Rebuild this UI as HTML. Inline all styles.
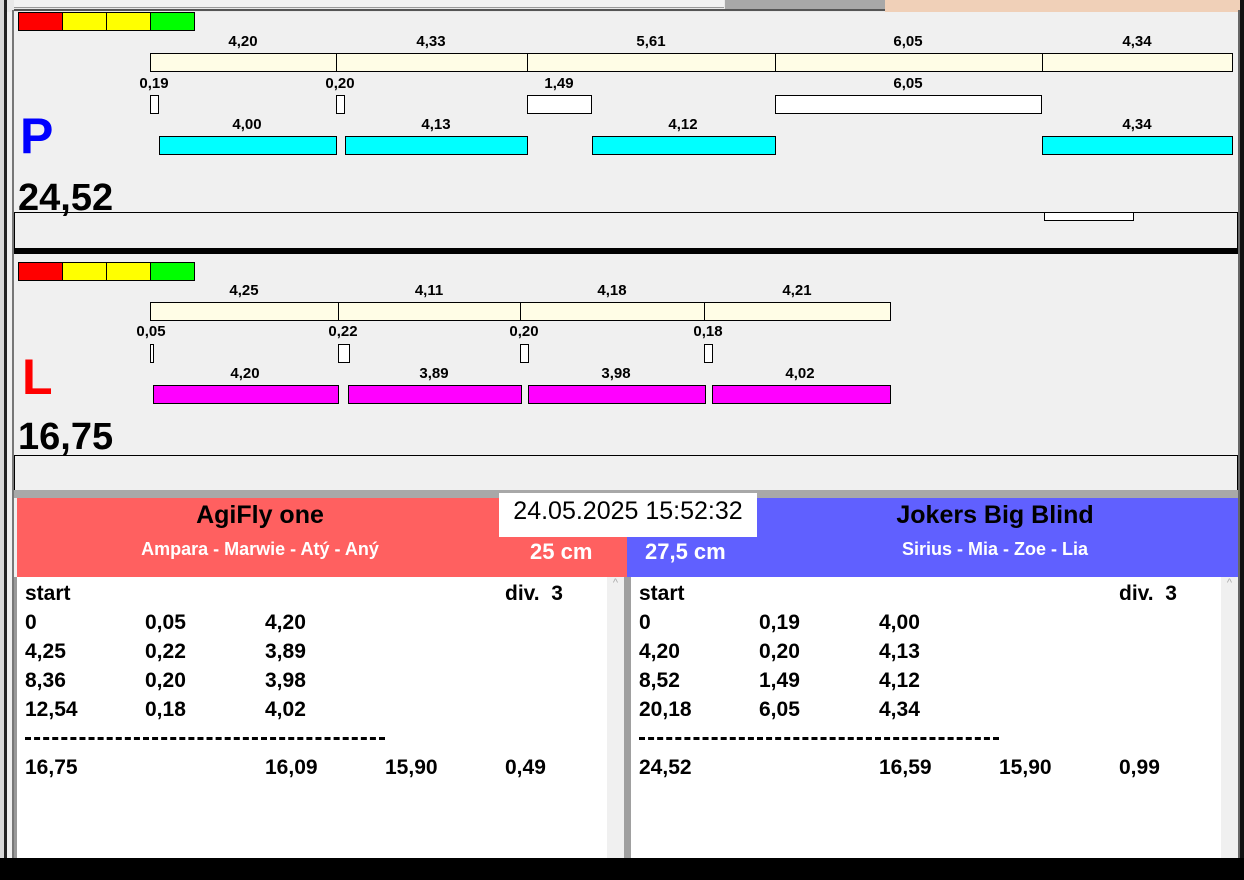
<!DOCTYPE html>
<html><head><meta charset="utf-8"><style>
*{margin:0;padding:0;box-sizing:border-box}
body{width:1244px;height:880px;overflow:hidden;background:#f0f0f0;font-family:"Liberation Sans",Arial,sans-serif;position:relative}
div{position:absolute}
.b{border:1px solid #000}
.l{width:100px;text-align:center;font-weight:bold;font-size:15px;line-height:16px;color:#000;margin-top:2px}
.cr{background:#fffde6}
.cy{background:#00ffff}
.mg{background:#ff00ff}
.w{background:#fff}
.t{font-weight:bold;font-size:21px;line-height:24px;color:#000;white-space:nowrap;margin-top:1px}
</style></head><body>
<!-- top strip -->
<div style="left:0;top:0;width:1244px;height:12px;background:#e8e8e8"></div>
<div style="left:14px;top:0;width:710px;height:8px;background:#f2f2f2;border-bottom:1px solid #999"></div>
<div style="left:725px;top:0;width:160px;height:9px;background:#a8a8a8"></div>
<div style="left:885px;top:0;width:355px;height:12px;background:#f0d0b8"></div>
<div style="left:14px;top:9px;width:871px;height:2px;background:#555"></div>
<div style="left:0;top:0;width:4px;height:880px;background:#d8d8d8"></div>
<div style="left:4px;top:0;width:3px;height:880px;background:#222"></div>
<div style="left:12px;top:10px;width:2px;height:850px;background:#777"></div>
<div style="left:1238px;top:10px;width:2px;height:850px;background:#666"></div>
<div style="left:1240px;top:0;width:4px;height:880px;background:#111"></div>

<!-- panel 1 -->
<div class="b" style="left:18px;top:12px;width:45px;height:19px;background:#f00"></div>
<div class="b" style="left:62px;top:12px;width:45px;height:19px;background:#ff0"></div>
<div class="b" style="left:106px;top:12px;width:45px;height:19px;background:#ff0"></div>
<div class="b" style="left:150px;top:12px;width:45px;height:19px;background:#0f0"></div>

<div class="l" style="left:193px;top:32px">4,20</div>
<div class="l" style="left:381px;top:32px">4,33</div>
<div class="l" style="left:601px;top:32px">5,61</div>
<div class="l" style="left:858px;top:32px">6,05</div>
<div class="l" style="left:1087px;top:32px">4,34</div>
<div class="b cr" style="left:150px;top:53px;width:187px;height:19px"></div>
<div class="b cr" style="left:336px;top:53px;width:192px;height:19px"></div>
<div class="b cr" style="left:527px;top:53px;width:249px;height:19px"></div>
<div class="b cr" style="left:775px;top:53px;width:268px;height:19px"></div>
<div class="b cr" style="left:1042px;top:53px;width:191px;height:19px"></div>

<div class="l" style="left:104px;top:74px">0,19</div>
<div class="l" style="left:290px;top:74px">0,20</div>
<div class="l" style="left:509px;top:74px">1,49</div>
<div class="l" style="left:858px;top:74px">6,05</div>
<div class="b w" style="left:150px;top:95px;width:9px;height:19px"></div>
<div class="b w" style="left:336px;top:95px;width:9px;height:19px"></div>
<div class="b w" style="left:527px;top:95px;width:65px;height:19px"></div>
<div class="b w" style="left:775px;top:95px;width:267px;height:19px"></div>

<div class="l" style="left:197px;top:115px">4,00</div>
<div class="l" style="left:386px;top:115px">4,13</div>
<div class="l" style="left:633px;top:115px">4,12</div>
<div class="l" style="left:1087px;top:115px">4,34</div>
<div class="b cy" style="left:159px;top:136px;width:178px;height:19px"></div>
<div class="b cy" style="left:345px;top:136px;width:183px;height:19px"></div>
<div class="b cy" style="left:592px;top:136px;width:184px;height:19px"></div>
<div class="b cy" style="left:1042px;top:136px;width:191px;height:19px"></div>

<div style="left:20px;top:108px;font-weight:bold;font-size:50px;line-height:56px;color:#0000ff">P</div>
<div style="left:18px;top:177px;font-weight:bold;font-size:38px;line-height:42px;color:#000">24,52</div>
<div class="b" style="left:14px;top:212px;width:1224px;height:37px;border-color:#000"></div>
<div class="b w" style="left:1044px;top:212px;width:90px;height:9px"></div>
<div style="left:14px;top:248px;width:1224px;height:6px;background:#000"></div>

<!-- panel 2 -->
<div class="b" style="left:18px;top:262px;width:45px;height:19px;background:#f00"></div>
<div class="b" style="left:62px;top:262px;width:45px;height:19px;background:#ff0"></div>
<div class="b" style="left:106px;top:262px;width:45px;height:19px;background:#ff0"></div>
<div class="b" style="left:150px;top:262px;width:45px;height:19px;background:#0f0"></div>

<div class="l" style="left:194px;top:281px">4,25</div>
<div class="l" style="left:379px;top:281px">4,11</div>
<div class="l" style="left:562px;top:281px">4,18</div>
<div class="l" style="left:747px;top:281px">4,21</div>
<div class="b cr" style="left:150px;top:302px;width:189px;height:19px"></div>
<div class="b cr" style="left:338px;top:302px;width:183px;height:19px"></div>
<div class="b cr" style="left:520px;top:302px;width:185px;height:19px"></div>
<div class="b cr" style="left:704px;top:302px;width:187px;height:19px"></div>

<div class="l" style="left:101px;top:322px">0,05</div>
<div class="l" style="left:293px;top:322px">0,22</div>
<div class="l" style="left:474px;top:322px">0,20</div>
<div class="l" style="left:658px;top:322px">0,18</div>
<div class="b w" style="left:150px;top:344px;width:4px;height:19px"></div>
<div class="b w" style="left:338px;top:344px;width:12px;height:19px"></div>
<div class="b w" style="left:520px;top:344px;width:9px;height:19px"></div>
<div class="b w" style="left:704px;top:344px;width:9px;height:19px"></div>

<div class="l" style="left:195px;top:364px">4,20</div>
<div class="l" style="left:384px;top:364px">3,89</div>
<div class="l" style="left:566px;top:364px">3,98</div>
<div class="l" style="left:750px;top:364px">4,02</div>
<div class="b mg" style="left:153px;top:385px;width:186px;height:19px"></div>
<div class="b mg" style="left:348px;top:385px;width:174px;height:19px"></div>
<div class="b mg" style="left:528px;top:385px;width:178px;height:19px"></div>
<div class="b mg" style="left:712px;top:385px;width:179px;height:19px"></div>

<div style="left:22px;top:351px;font-weight:bold;font-size:50px;line-height:52px;color:#ff0000">L</div>
<div style="left:18px;top:416px;font-weight:bold;font-size:38px;line-height:42px;color:#000">16,75</div>
<div class="b" style="left:14px;top:455px;width:1224px;height:36px"></div>

<!-- bottom -->
<div style="left:14px;top:490px;width:1224px;height:8px;background:#a8a8a8"></div>
<div style="left:17px;top:498px;width:610px;height:79px;background:#ff6060"></div>
<div style="left:627px;top:498px;width:611px;height:79px;background:#6060ff"></div>
<div style="left:17px;top:500px;width:486px;text-align:center;font-weight:bold;font-size:25px;line-height:30px">AgiFly one</div>
<div style="left:17px;top:538px;width:486px;text-align:center;font-weight:bold;font-size:18px;line-height:22px;color:#fff">Ampara - Marwie - Atý - Aný</div>
<div style="left:530px;top:539px;font-weight:bold;font-size:22px;line-height:26px;color:#fff">25 cm</div>
<div style="left:645px;top:539px;font-weight:bold;font-size:22px;line-height:26px;color:#fff">27,5 cm</div>
<div style="left:757px;top:500px;width:476px;text-align:center;font-weight:bold;font-size:25px;line-height:30px">Jokers Big Blind</div>
<div style="left:757px;top:538px;width:476px;text-align:center;font-weight:bold;font-size:18px;line-height:22px;color:#fff">Sirius - Mia - Zoe - Lia</div>
<div style="left:499px;top:493px;width:258px;height:44px;background:#fff;text-align:center;font-size:25px;line-height:36px;color:#000">24.05.2025 15:52:32</div>

<div style="left:14px;top:577px;width:3px;height:281px;background:#999"></div>
<div style="left:17px;top:577px;width:590px;height:281px;background:#fff"></div>
<div style="left:607px;top:577px;width:17px;height:281px;background:#f0f0f0;color:#aaa;font-size:11px;text-align:center">^</div>
<div style="left:624px;top:577px;width:7px;height:281px;background:#a0a0a0"></div>
<div style="left:631px;top:577px;width:590px;height:281px;background:#fff"></div>
<div style="left:1221px;top:577px;width:17px;height:281px;background:#f0f0f0;color:#aaa;font-size:11px;text-align:center">^</div>
<div style="left:0;top:858px;width:1244px;height:22px;background:#000"></div>

<div class="t" style="left:25px;top:581px">start</div><div class="t" style="left:505px;top:581px">div.&nbsp; 3</div>
<div class="t" style="left:25px;top:610px">0</div><div class="t" style="left:145px;top:610px">0,05</div><div class="t" style="left:265px;top:610px">4,20</div>
<div class="t" style="left:25px;top:639px">4,25</div><div class="t" style="left:145px;top:639px">0,22</div><div class="t" style="left:265px;top:639px">3,89</div>
<div class="t" style="left:25px;top:668px">8,36</div><div class="t" style="left:145px;top:668px">0,20</div><div class="t" style="left:265px;top:668px">3,98</div>
<div class="t" style="left:25px;top:697px">12,54</div><div class="t" style="left:145px;top:697px">0,18</div><div class="t" style="left:265px;top:697px">4,02</div>
<div style="left:25px;top:737px;width:360px;height:3px;border-top:3px dashed #000"></div>
<div class="t" style="left:25px;top:755px">16,75</div><div class="t" style="left:265px;top:755px">16,09</div><div class="t" style="left:385px;top:755px">15,90</div><div class="t" style="left:505px;top:755px">0,49</div>

<div class="t" style="left:639px;top:581px">start</div><div class="t" style="left:1119px;top:581px">div.&nbsp; 3</div>
<div class="t" style="left:639px;top:610px">0</div><div class="t" style="left:759px;top:610px">0,19</div><div class="t" style="left:879px;top:610px">4,00</div>
<div class="t" style="left:639px;top:639px">4,20</div><div class="t" style="left:759px;top:639px">0,20</div><div class="t" style="left:879px;top:639px">4,13</div>
<div class="t" style="left:639px;top:668px">8,52</div><div class="t" style="left:759px;top:668px">1,49</div><div class="t" style="left:879px;top:668px">4,12</div>
<div class="t" style="left:639px;top:697px">20,18</div><div class="t" style="left:759px;top:697px">6,05</div><div class="t" style="left:879px;top:697px">4,34</div>
<div style="left:639px;top:737px;width:360px;height:3px;border-top:3px dashed #000"></div>
<div class="t" style="left:639px;top:755px">24,52</div><div class="t" style="left:879px;top:755px">16,59</div><div class="t" style="left:999px;top:755px">15,90</div><div class="t" style="left:1119px;top:755px">0,99</div>
</body></html>
